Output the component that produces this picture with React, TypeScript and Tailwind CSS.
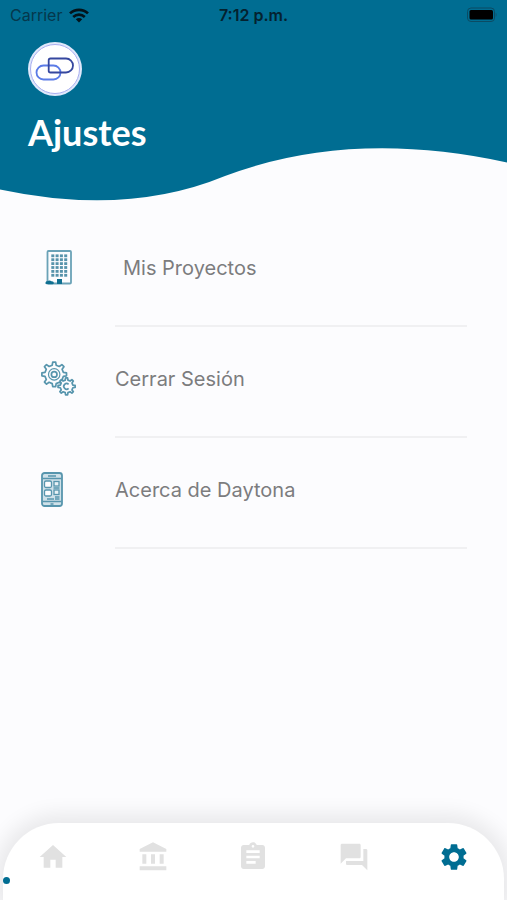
import { useState } from 'react';
import type { ReactNode } from 'react';
import type { IconType } from 'react-icons';
import { MdAccountBalance, MdAssignment, MdForum, MdHome, MdSettings } from 'react-icons/md';

type TabType = 'home' | 'bank' | 'tasks' | 'chat' | 'settings';

const tabs: { id: TabType; label: string; icon: IconType }[] = [
  { id: 'home', label: 'Inicio', icon: MdHome },
  { id: 'bank', label: 'Banco', icon: MdAccountBalance },
  { id: 'tasks', label: 'Tareas', icon: MdAssignment },
  { id: 'chat', label: 'Mensajes', icon: MdForum },
  { id: 'settings', label: 'Ajustes', icon: MdSettings },
];

// Closed outline of a gear, teeth evenly spread around the centre
const gearPath = (cx: number, cy: number, outer: number, inner: number, teeth: number) => {
  const step = (Math.PI * 2) / teeth;
  const at = (r: number, a: number) => `${(cx + r * Math.cos(a)).toFixed(2)} ${(cy + r * Math.sin(a)).toFixed(2)}`;
  const points: string[] = [];
  for (let i = 0; i < teeth; i++) {
    const a = i * step - Math.PI / 2;
    points.push(
      at(inner, a - step * 0.27),
      at(outer, a - step * 0.15),
      at(outer, a + step * 0.15),
      at(inner, a + step * 0.27)
    );
  }
  return `M${points.join('L')}Z`;
};

function BuildingIcon() {
  const rows = [0, 1, 2, 3, 4, 5];
  const cols = [0, 1, 2, 3];
  return (
    <svg viewBox="0 0 36 36" className="size-9" fill="none" aria-hidden="true">
      <rect x="6.5" y="1" width="23.5" height="32.5" rx="1" stroke="#6aa2b7" strokeWidth="1.8" />
      {rows.map((r) =>
        cols.map((c) => (
          <rect key={`${r}-${c}`} x={10.3 + c * 4.3} y={4.4 + r * 3.9} width="3" height="2.8" fill="#5793ab" />
        ))
      )}
      <path d="M16 34v-5h5v5z" fill="#0f6f91" />
      <path d="M4.500 33c0-1.400 1-2 2-1.700.8-1.200 3.200-1.200 3.800 0 1.500-.3 2.500.6 2.500 1.700 0 .8-.5 1.200-1.200 1.200H5.700c-.7 0-1.200-.4-1.200-1.200z" fill="#0f6f91" />
    </svg>
  );
}

function GearsIcon() {
  return (
    <svg viewBox="0 0 36 36" className="size-9" fill="none" stroke="#5795ad" strokeWidth="1.7" strokeLinejoin="round" aria-hidden="true">
      <path d={gearPath(13.2, 13.4, 12.4, 9.4, 8)} />
      <circle cx="13.2" cy="13.4" r="5.7" strokeWidth="1.2" />
      <circle cx="13.2" cy="13.4" r="2.8" />
      <path d={gearPath(25.6, 25.4, 8.6, 6.4, 8)} fill="#fcfcfe" />
      <path d="M27.6 23.400a2.800 2.800 0 1 0 0 4" />
    </svg>
  );
}

function PhoneIcon() {
  return (
    <svg viewBox="0 0 36 36" className="size-9" fill="none" stroke="#5795ad" strokeWidth="1.3" aria-hidden="true">
      <rect x="1" y="1" width="20" height="33" rx="2.5" fill="#cfe1e9" strokeWidth="1.8" />
      <path d="M1.5 6.500h19M1.5 29.500h19" />
      <path d="M7 4h8M9.500 32h3" />
      <rect x="3.5" y="9" width="7" height="6.500" rx="1.5" fill="#fcfcfe" />
      <rect x="3.5" y="18" width="7" height="6" rx="1.5" fill="#fcfcfe" />
      <rect x="13" y="9.5" width="5" height="4.500" fill="#e8f1f5" />
      <rect x="13" y="18" width="5" height="4.500" fill="#e8f1f5" />
      <path d="M12.5 16h6M6 27h7M14 25h4.500M14 27h4.500" />
    </svg>
  );
}

function StatusBar() {
  return (
    <div className="grid grid-cols-3 items-center h-[30px] px-[10px] text-[16px] leading-5 text-[#05384c]">
      <div className="flex items-center gap-[7px]">
        <span>Carrier</span>
        <svg viewBox="0 0 20 15" className="w-5 h-[15px]" fill="none" stroke="#03131a" strokeWidth="2.7" aria-hidden="true">
          <path d="M1 5.400C6 .6 14 .6 19 5.400" />
          <path d="M4.200 8.900c3.400-3 8.200-3 11.600 0" />
          <path d="M10 14.500 6.800 11.300c1.800-1.600 4.600-1.600 6.400 0z" fill="#03131a" stroke="none" />
        </svg>
      </div>
      <time className="text-center font-semibold text-[#04222f] whitespace-nowrap">7:12 p.m.</time>
      <svg viewBox="0 0 32 16" className="w-8 h-4 justify-self-end" aria-hidden="true">
        <rect x="2.5" y="1" width="27" height="13.5" rx="3.5" fill="none" stroke="#0b4b63" />
        <rect x="4.5" y="3" width="23.5" height="9.5" rx="1.5" fill="#000" />
        <path d="M30.500 5.800v4c1-.4 1.300-1.200 1.300-2s-.3-1.600-1.300-2z" fill="#0b5a78" />
      </svg>
    </div>
  );
}

function Header() {
  return (
    <header className="relative h-[201px]">
      <svg viewBox="0 0 507 201" preserveAspectRatio="none" className="absolute inset-0 w-full h-full" aria-hidden="true">
        <path d="M0 0V189.500Q127 216.500 225 176Q351 128.500 507 162.500V0Z" fill="#006d92" />
      </svg>
      <div className="relative">
        <StatusBar />
        <div className="px-7 pt-3">
          <svg viewBox="0 0 54 54" className="size-[54px]" fill="none" aria-hidden="true">
            <circle cx="27" cy="27" r="27" fill="#dfe8fb" />
            <circle cx="27" cy="27" r="24.5" fill="#fff" stroke="#a9aef0" strokeWidth="1" />
            <rect x="8.5" y="23.5" width="24" height="14" rx="7" stroke="#5b7be6" strokeWidth="1.8" />
            <path d="M22.500 16.500H38a7 7 0 0 1 0 14H22.500a1.800 1.800 0 0 1-1.800-1.800V18.300a1.800 1.800 0 0 1 1.800-1.800z" stroke="#35479f" strokeWidth="1.8" />
          </svg>
          <h1 className="mt-3 font-['Lato',sans-serif] text-[36px] leading-[48px] font-bold text-white">Ajustes</h1>
        </div>
      </div>
    </header>
  );
}

function SettingsRow({ icon, label, indent }: { icon: ReactNode; label: string; indent?: boolean }) {
  return (
    <li className="px-10">
      <button type="button" className="flex w-full gap-[38px] pl-px text-left">
        <span className="pt-[34px]">{icon}</span>
        <span
          className={`flex-1 h-[111px] pt-10 border-b-2 border-[#f0f0f2] text-[20px] leading-[24px] text-[#7c7c7e] ${
            indent ? 'pl-2' : ''
          }`}
        >
          {label}
        </span>
      </button>
    </li>
  );
}

export default function App() {
  const [activeTab, setActiveTab] = useState<TabType>('settings');

  return (
    <div className="min-h-screen flex flex-col overflow-hidden bg-[#fcfcfe] font-['Inter',sans-serif]">
      <Header />

      <main className="flex-1 pt-[15px]">
        <ul>
          <SettingsRow icon={<BuildingIcon />} label="Mis Proyectos" indent />
          <SettingsRow icon={<GearsIcon />} label="Cerrar Sesión" />
          <SettingsRow icon={<PhoneIcon />} label="Acerca de Daytona" />
        </ul>
      </main>

      {/* Bottom navigation */}
      <nav className="relative mx-[3px] h-[77px] rounded-t-[56px] bg-white shadow-[0_0_20px_9px_rgba(0,0,0,0.08)]">
        <div className="grid grid-cols-5 pt-[18px]">
          {tabs.map(({ id, label, icon: Icon }) => (
            <button
              key={id}
              type="button"
              onClick={() => setActiveTab(id)}
              aria-label={label}
              className={`flex justify-center ${activeTab === id ? 'text-[#006d92]' : 'text-[#e1e1e1]'}`}
            >
              <Icon className="size-8" />
            </button>
          ))}
        </div>
        <span className="absolute left-0 bottom-4 size-[7px] rounded-full bg-[#006d92]" />
      </nav>
    </div>
  );
}
